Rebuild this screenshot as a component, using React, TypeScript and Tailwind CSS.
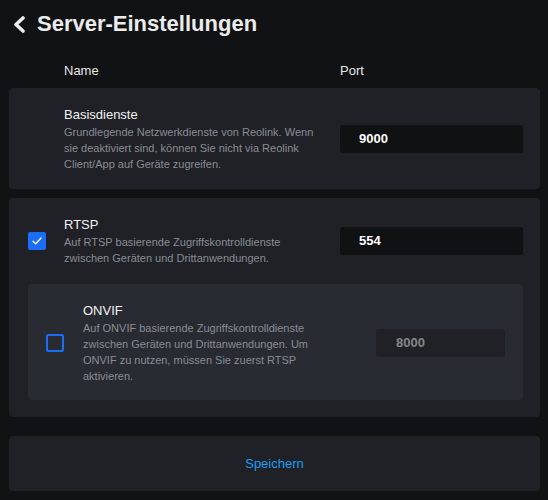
import React from "react";

const font = { fontFamily: '"Liberation Sans", Arial, Helvetica, sans-serif' };

function BackChevron() {
  return (
    <svg width="14" height="17" viewBox="0 0 14 17" fill="none">
      <polyline
        points="11,2 4,8.5 11,15"
        stroke="#ececec"
        strokeWidth="3.6"
        strokeLinecap="round"
        strokeLinejoin="round"
      />
    </svg>
  );
}

function Checkbox({ checked }: { checked: boolean }) {
  if (checked) {
    return (
      <div className="flex h-[18px] w-[18px] shrink-0 items-center justify-center rounded-[2px] bg-[#1a6df5]">
        <svg width="10" height="8" viewBox="0 0 10 8" fill="none">
          <polyline points="1,4.2 3.7,6.8 9,1" stroke="#ffffff" strokeWidth="1.3" strokeLinecap="round" strokeLinejoin="round" />
        </svg>
      </div>
    );
  }
  return <div className="h-[18px] w-[18px] shrink-0 rounded-[2px] border-2 border-[#1a6df5]" />;
}

function Service({
  title,
  desc,
  textWidth,
}: {
  title: string;
  desc: string;
  textWidth: string;
}) {
  return (
    <div className={textWidth}>
      <div className="text-[13px] leading-[18px] text-[#f2f2f2]">{title}</div>
      <div className="text-[11px] leading-[16px] text-[#8a8d93]">{desc}</div>
    </div>
  );
}

export default function App() {
  return (
    <div className="h-[500px] w-[548px] overflow-hidden bg-[#111213] pl-[9px] pr-[8px]" style={font}>
      {/* header */}
      <div className="flex items-center gap-[11px] pl-[3px] pt-[10px]">
        <BackChevron />
        <h1 className="text-[22px] font-bold leading-[28px] text-[#ececec]">Server-Einstellungen</h1>
      </div>

      {/* column labels */}
      <div className="flex pt-[25px] text-[13px] leading-[16px] text-[#e6e6e6]">
        <span className="pl-[55px]">Name</span>
        <span className="ml-auto w-[200px]">Port</span>
      </div>

      {/* Basisdienste */}
      <div className="mt-[9px] flex items-center rounded-[4px] bg-[#1f2126] pb-[17px] pl-[19px] pr-[17px] pt-[18px]">
        <div className="w-[18px] shrink-0" />
        <div className="ml-[18px]">
          <Service
            title="Basisdienste"
            desc="Grundlegende Netzwerkdienste von Reolink. Wenn sie deaktiviert sind, können Sie nicht via Reolink Client/App auf Geräte zugreifen."
            textWidth="w-[258px]"
          />
        </div>
        <div className="ml-auto flex h-[28px] w-[183px] items-center rounded-[3px] bg-[#101112] pl-[19px] text-[13px] font-bold text-white">
          9000
        </div>
      </div>

      {/* RTSP + ONVIF */}
      <div className="mt-[9px] rounded-[4px] bg-[#1f2126] pb-[17px] pl-[19px] pr-[17px] pt-[18px]">
        <div className="flex items-center">
          <Checkbox checked />
          <div className="ml-[18px]">
            <Service
              title="RTSP"
              desc="Auf RTSP basierende Zugriffskontrolldienste zwischen Geräten und Drittanwendungen."
              textWidth="w-[258px]"
            />
          </div>
          <div className="ml-auto flex h-[28px] w-[183px] items-center rounded-[3px] bg-[#101112] pl-[19px] text-[13px] font-bold text-white">
            554
          </div>
        </div>

        <div className="mt-[18px] flex items-center rounded-[4px] bg-[#282b32] pb-[16px] pl-[18px] pr-[18px] pt-[18px]">
          <Checkbox checked={false} />
          <div className="ml-[19px]">
            <Service
              title="ONVIF"
              desc="Auf ONVIF basierende Zugriffskontrolldienste zwischen Geräten und Drittanwendungen. Um ONVIF zu nutzen, müssen Sie zuerst RTSP aktivieren."
              textWidth="w-[238px]"
            />
          </div>
          <div className="ml-auto flex h-[28px] w-[129px] items-center rounded-[3px] bg-[#1f2126] pl-[20px] text-[13px] font-bold text-[#85878b]">
            8000
          </div>
        </div>
      </div>

      {/* save */}
      <button className="mt-[19px] flex h-[55px] w-full items-center justify-center rounded-[4px] bg-[#1f2126] text-[13px] text-[#1a9ff0]">
        Speichern
      </button>
    </div>
  );
}
